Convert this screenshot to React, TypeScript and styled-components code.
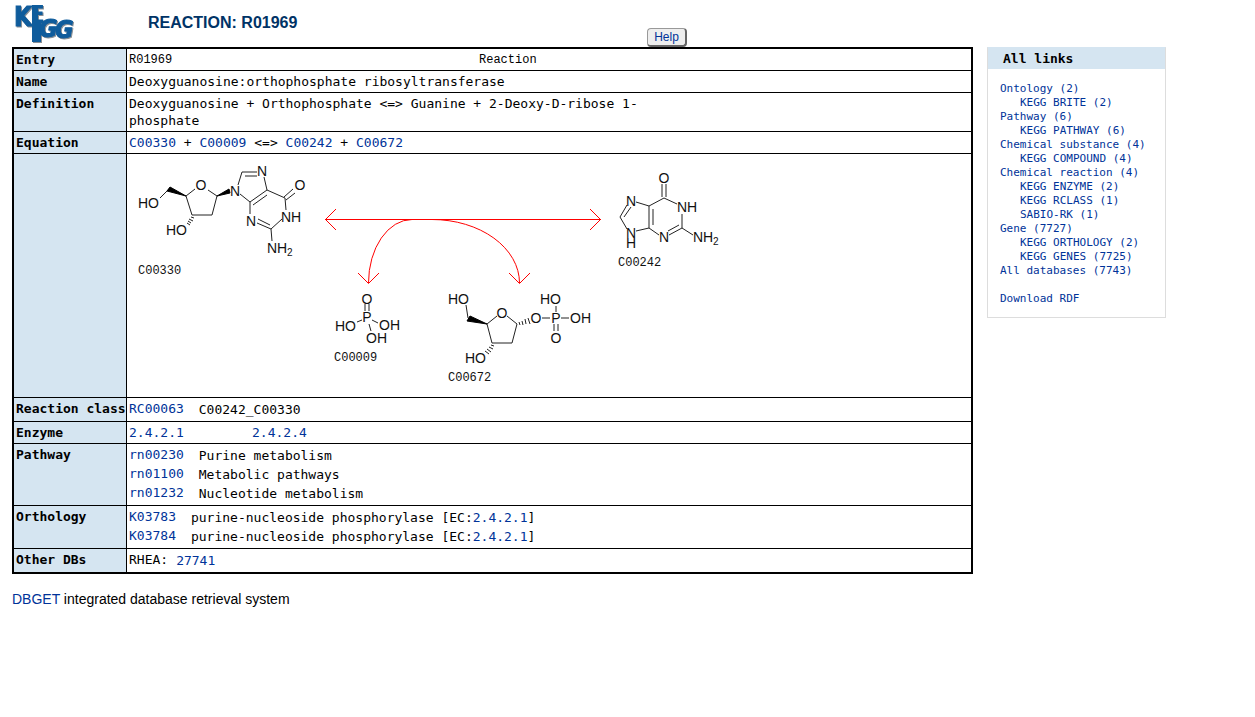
import React from "react";
import styled, { createGlobalStyle } from "styled-components";

const MONO = '"DejaVu Sans Mono", Consolas, monospace';
const SANS = '"Liberation Sans", Arial, sans-serif';
const TYPEWRITER = '"Liberation Mono", "Courier New", monospace';

const GlobalStyle = createGlobalStyle`
  * { box-sizing: border-box; }
  body {
    margin: 0;
    background: #fff;
    color: #000;
    font-family: ${SANS};
    font-size: 14px;
  }
`;

const Link = styled.a`
  color: #039;
  text-decoration: none;
  &:hover { text-decoration: underline; }
`;

const Page = styled.div`
  display: flex;
  align-items: flex-start;
  gap: 14px;
  padding: 0 89px 24px 12px;
`;

const Main = styled.main`
  flex: 1;
  min-width: 0;
`;

const Header = styled.header`
  display: grid;
  grid-template-columns: 136px 499px auto;
  justify-content: start;
  height: 47px;
`;

const Logo = styled.svg`
  display: block;
  overflow: visible;
  filter: drop-shadow(1px 1px 0 #8a8f94);
`;

const Title = styled.h1`
  margin: 0;
  padding-top: 14px;
  font-size: 16px;
  line-height: 18px;
  color: #036;
`;

const HelpButton = styled.button`
  align-self: end;
  width: 40px;
  height: 19px;
  padding: 0;
  border: 1px solid #999;
  border-right: 2px solid #666;
  border-bottom: 2px solid #666;
  border-radius: 4px;
  background: #eee;
  color: #039;
  font: 12px/16px ${SANS};
`;

const EntryTable = styled.table`
  width: 100%;
  table-layout: fixed;
  border: 2px solid #000;
  border-collapse: separate;
  border-spacing: 0;
  font: 13px/17px ${MONO};

  tr:last-child > * { border-bottom: 0; }
`;

const LabelColumn = styled.col`
  width: 113px;
`;

const Label = styled.th`
  padding: 2px 0 2px 2px;
  border-right: 1px solid #000;
  border-bottom: 1px solid #000;
  background: #d5e5f1;
  text-align: left;
  vertical-align: top;
  white-space: nowrap;
`;

const Value = styled.td`
  padding: 2px;
  border-bottom: 1px solid #000;
  vertical-align: top;
`;

const EntryLine = styled.div`
  display: grid;
  grid-template-columns: 350px auto;
  padding-top: 2px;
  font: 12px/15px ${TYPEWRITER};
`;

const Definition = styled.div`
  max-width: 512px;
`;

const EnzymeList = styled.div`
  display: grid;
  grid-template-columns: 123px auto;
  justify-content: start;
`;

const Item = styled.div<{ $gap: number }>`
  display: flex;
  gap: ${(p) => p.$gap}px;
  height: 19px;
`;

const ItemText = styled.span`
  padding-top: 1px;
`;

const Scheme = styled.svg`
  display: block;
  max-width: 100%;
`;

const Footer = styled.footer`
  padding-top: 17px;
  line-height: 17px;
`;

const Sidebar = styled.aside`
  flex: 0 0 179px;
  margin-top: 47px;
  border: 1px solid #ddd;
  border-top-color: #d5e5f1;
`;

const SidebarTitle = styled.h2`
  margin: 0;
  padding: 2px 15px;
  background: #d5e5f1;
  font: bold 13px/17px ${MONO};
`;

const LinkList = styled.ul`
  margin: 0;
  padding: 13px 0 11px 12px;
  list-style: none;
  font: 11px/14px ${MONO};
  white-space: nowrap;
`;

const LinkItem = styled.li<{ $nested?: boolean; $spaced?: boolean }>`
  padding-left: ${(p) => (p.$nested ? 20 : 0)}px;
  margin-top: ${(p) => (p.$spaced ? 14 : 0)}px;
`;

type Mol = {
  bonds: string;
  solid?: string;
  atoms: [number, number, string][];
  centered?: [number, number, string][];
  subs?: [number, number, string][];
  caption: [number, number, string];
};

const molecules: Mol[] = [
  {
    bonds:
      "M160 198L169 189M186 196L195 189M208 190L217 196L212 215H192L186 196" +
      "M191 217l3 1M189 219l4 2M188 221l3 2M187 223l3 2" +
      "M238 185L242 172H257M245 176H257M264 177L267 190L250 202L240 194" +
      "M267 195L253 205M267 190L285 198M284 197L293 189M286 200L295 193" +
      "M285 198L286 210M282 219L271 229L257 223M270 225L258 219M250 214V202M271 229L272 241",
    solid: "M186 196L170 187L167 191ZM217 196L229 189L230 193Z",
    atoms: [[138, 208, "HO"], [166, 235, "HO"], [281, 222, "NH"], [267, 253, "NH"]],
    centered: [[201, 190, "O"], [235, 196, "N"], [262, 176, "N"], [300, 190, "O"], [251, 226, "N"]],
    subs: [[287, 256, "2"]],
    caption: [138, 274, "C00330"],
  },
  {
    bonds:
      "M662 184V197M666 184V197M664 198L677 204M682 214V228L669 235M679 225L668 231" +
      "M682 228L693 235M659 235L649 228V206L664 198M653 209V225M649 206L636 202" +
      "M627 205L620 217L627 229M631 207L624 217M636 231L649 228",
    atoms: [[677, 212, "NH"], [693, 242, "NH"]],
    centered: [[664, 183, "O"], [664, 242, "N"], [631, 206, "N"], [631, 238, "N"], [631, 248, "H"]],
    subs: [[713, 245, "2"]],
    caption: [618, 266, "C00242"],
  },
  {
    bonds: "M365 304V311M369 304V311M357 322L362 320M372 320L378 323M369 324L371 331",
    atoms: [[335, 331, "HO"], [379, 330, "OH"], [366, 343, "OH"]],
    centered: [[367, 304, "O"], [367, 322, "P"]],
    caption: [334, 361, "C00009"],
  },
  {
    bonds:
      "M466 305L468 318M487 324L497 316M507 316L517 324L512 343H492L487 324" +
      "M519 322l1 3M522 321l1 4M525 319l1 5M528 318l2 6" +
      "M491 345l3 1M489 347l4 2M487 349l4 3M485 351l4 3" +
      "M542 318H550M561 318H569M556 306V312M554 324V331M558 324V331",
    solid: "M487 324L470 316L467 321Z",
    atoms: [[448, 304, "HO"], [540, 304, "HO"], [570, 323, "OH"], [465, 363, "HO"]],
    centered: [[502, 318, "O"], [536, 323, "O"], [556, 323, "P"], [556, 343, "O"]],
    caption: [448, 381, "C00672"],
  },
];

const ReactionScheme = () => (
  <Scheme width="600" height="239" viewBox="129 156 600 239" role="img" aria-label="Reaction scheme">
    {molecules.map((m) => (
      <g key={m.caption[2]} fill="#111" fontFamily={SANS} fontSize="14">
        <path d={m.bonds} fill="none" stroke="#222" strokeWidth="1" />
        {m.solid && <path d={m.solid} fill="#000" stroke="#000" strokeWidth="1" />}
        {m.atoms.map(([x, y, t]) => <text key={`${x}-${y}`} x={x} y={y}>{t}</text>)}
        {m.centered?.map(([x, y, t]) => (
          <text key={`${x}-${y}`} x={x} y={y} textAnchor="middle">{t}</text>
        ))}
        {m.subs?.map(([x, y, t]) => <text key={`${x}-${y}`} x={x} y={y} fontSize="10">{t}</text>)}
        <text x={m.caption[0]} y={m.caption[1]} fontFamily={TYPEWRITER} fontSize="12">{m.caption[2]}</text>
      </g>
    ))}
    <g fill="none" stroke="#ff0000">
      <path d="M325 219.5H601" />
      <path d="M336 209L325.5 219.5L336 230" />
      <path d="M590 209L600.5 219.5L590 230" />
      <path d="M412 219.5A43.5 63.5 0 0 0 368.5 283" />
      <path d="M432 219.5A87.5 63.5 0 0 1 519.5 283" />
      <path d="M358 273L368.5 283.5L379 273" />
      <path d="M509 273L519.5 283.5L530 273" />
    </g>
  </Scheme>
);

const KeggLogo = () => (
  <Logo width="64" height="46" viewBox="12 0 64 46" role="img" aria-label="KEGG">
    <g
      fill="#0f5c9c"
      fontWeight="bold"
      fontFamily="DejaVu Sans Condensed, DejaVu Sans, sans-serif"
    >
      <text x="14" y="26" fontSize="26" stroke="#0f5c9c">K</text>
      <text x="30" y="23" fontSize="24">E</text>
      <rect x="32" y="20" width="9" height="22" />
      <rect x="32" y="6" width="6" height="36" />
      <g fontSize="25" fontStyle="italic" stroke="#0f5c9c" strokeWidth="1">
        <text x="39" y="37">G</text>
        <text x="55" y="38">G</text>
      </g>
    </g>
  </Logo>
);

const pathways = [
  ["rn00230", "Purine metabolism"],
  ["rn01100", "Metabolic pathways"],
  ["rn01232", "Nucleotide metabolism"],
];

const orthologs = ["K03783", "K03784"];

const links: { text: string; nested?: boolean; spaced?: boolean }[] = [
  { text: "Ontology (2)" },
  { text: "KEGG BRITE (2)", nested: true },
  { text: "Pathway (6)" },
  { text: "KEGG PATHWAY (6)", nested: true },
  { text: "Chemical substance (4)" },
  { text: "KEGG COMPOUND (4)", nested: true },
  { text: "Chemical reaction (4)" },
  { text: "KEGG ENZYME (2)", nested: true },
  { text: "KEGG RCLASS (1)", nested: true },
  { text: "SABIO-RK (1)", nested: true },
  { text: "Gene (7727)" },
  { text: "KEGG ORTHOLOGY (2)", nested: true },
  { text: "KEGG GENES (7725)", nested: true },
  { text: "All databases (7743)" },
  { text: "Download RDF", spaced: true },
];

const Row = ({ label, children }: { label: string; children: React.ReactNode }) => (
  <tr>
    <Label scope="row">{label}</Label>
    <Value>{children}</Value>
  </tr>
);

export default function App() {
  return (
    <>
      <GlobalStyle />
      <Page>
        <Main>
          <Header>
            <a href="#"><KeggLogo /></a>
            <Title>REACTION: R01969</Title>
            <HelpButton type="button">Help</HelpButton>
          </Header>
          <EntryTable>
            <colgroup>
              <LabelColumn />
              <col />
            </colgroup>
            <tbody>
              <Row label="Entry">
                <EntryLine><span>R01969</span><span>Reaction</span></EntryLine>
              </Row>
              <Row label="Name">Deoxyguanosine:orthophosphate ribosyltransferase</Row>
              <Row label="Definition">
                <Definition>
                  Deoxyguanosine + Orthophosphate &lt;=&gt; Guanine + 2-Deoxy-D-ribose 1-phosphate
                </Definition>
              </Row>
              <Row label="Equation">
                <Link href="#">C00330</Link> + <Link href="#">C00009</Link> &lt;=&gt;{" "}
                <Link href="#">C00242</Link> + <Link href="#">C00672</Link>
              </Row>
              <Row label=""><ReactionScheme /></Row>
              <Row label="Reaction class">
                <Item $gap={15}>
                  <Link href="#">RC00063</Link>
                  <ItemText>C00242_C00330</ItemText>
                </Item>
              </Row>
              <Row label="Enzyme">
                <EnzymeList>
                  <Link href="#">2.4.2.1</Link>
                  <Link href="#">2.4.2.4</Link>
                </EnzymeList>
              </Row>
              <Row label="Pathway">
                {pathways.map(([id, name]) => (
                  <Item key={id} $gap={15}>
                    <Link href="#">{id}</Link>
                    <ItemText>{name}</ItemText>
                  </Item>
                ))}
              </Row>
              <Row label="Orthology">
                {orthologs.map((id) => (
                  <Item key={id} $gap={15}>
                    <Link href="#">{id}</Link>
                    <ItemText>
                      purine-nucleoside phosphorylase [EC:<Link href="#">2.4.2.1</Link>]
                    </ItemText>
                  </Item>
                ))}
              </Row>
              <Row label="Other DBs">
                <Item $gap={8}>
                  <span>RHEA:</span>
                  <ItemText><Link href="#">27741</Link></ItemText>
                </Item>
              </Row>
            </tbody>
          </EntryTable>
          <Footer>
            <Link href="#">DBGET</Link> integrated database retrieval system
          </Footer>
        </Main>
        <Sidebar>
          <SidebarTitle>All links</SidebarTitle>
          <LinkList>
            {links.map(({ text, nested, spaced }) => (
              <LinkItem key={text} $nested={nested} $spaced={spaced}>
                <Link href="#">{text}</Link>
              </LinkItem>
            ))}
          </LinkList>
        </Sidebar>
      </Page>
    </>
  );
}
